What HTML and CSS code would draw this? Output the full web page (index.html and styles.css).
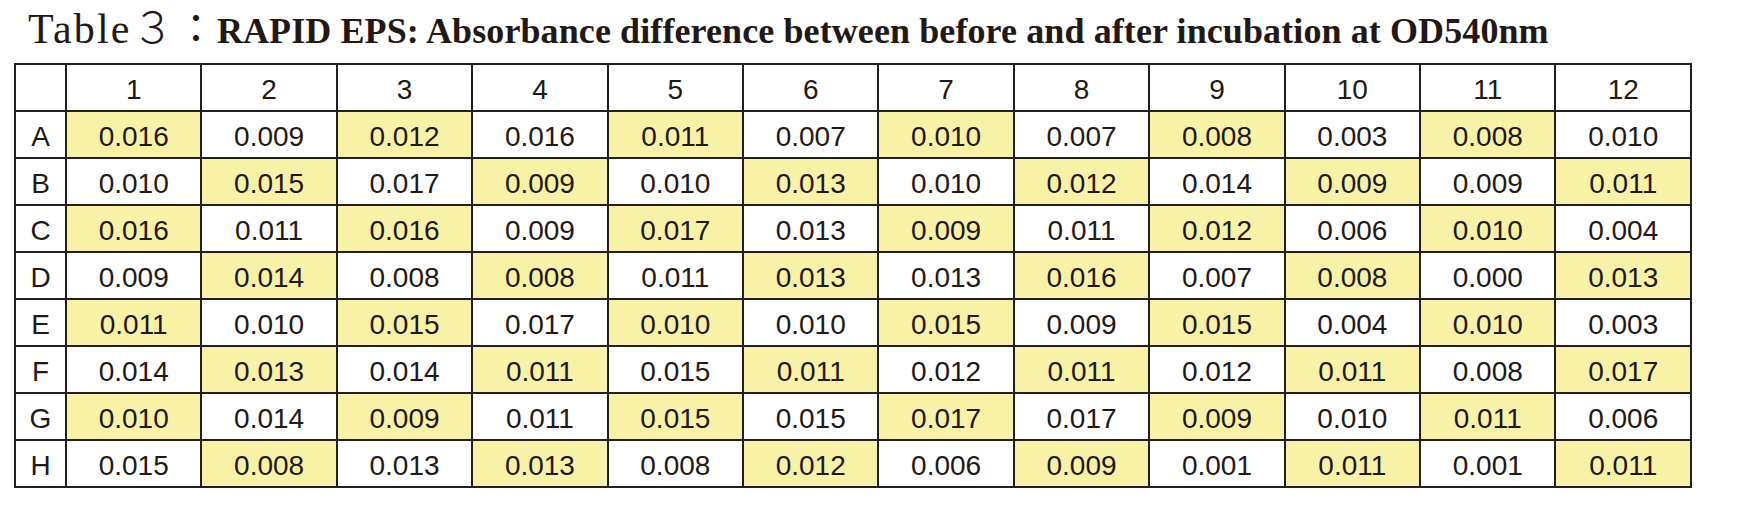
FILE: index.html
```html
<!DOCTYPE html>
<html lang="en">
<head>
    <meta charset="UTF-8">
    <title>Table 3 - RAPID EPS</title>
    <link rel="stylesheet" href="styles.css">
</head>
<body>

    <h1 class="caption">
        <span class="caption-num">Table３</span><span class="caption-colon">：</span><span class="caption-text">RAPID EPS: Absorbance difference between before and after incubation at OD540nm</span>
    </h1>

    <table class="plate">
        <thead>
            <tr>
                <th class="corner"></th>
                <th>1</th><th>2</th><th>3</th><th>4</th><th>5</th><th>6</th>
                <th>7</th><th>8</th><th>9</th><th>10</th><th>11</th><th>12</th>
            </tr>
        </thead>
        <tbody>
            <tr>
                <th>A</th>
                <td>0.016</td><td>0.009</td><td>0.012</td><td>0.016</td><td>0.011</td><td>0.007</td>
                <td>0.010</td><td>0.007</td><td>0.008</td><td>0.003</td><td>0.008</td><td>0.010</td>
            </tr>
            <tr>
                <th>B</th>
                <td>0.010</td><td>0.015</td><td>0.017</td><td>0.009</td><td>0.010</td><td>0.013</td>
                <td>0.010</td><td>0.012</td><td>0.014</td><td>0.009</td><td>0.009</td><td>0.011</td>
            </tr>
            <tr>
                <th>C</th>
                <td>0.016</td><td>0.011</td><td>0.016</td><td>0.009</td><td>0.017</td><td>0.013</td>
                <td>0.009</td><td>0.011</td><td>0.012</td><td>0.006</td><td>0.010</td><td>0.004</td>
            </tr>
            <tr>
                <th>D</th>
                <td>0.009</td><td>0.014</td><td>0.008</td><td>0.008</td><td>0.011</td><td>0.013</td>
                <td>0.013</td><td>0.016</td><td>0.007</td><td>0.008</td><td>0.000</td><td>0.013</td>
            </tr>
            <tr>
                <th>E</th>
                <td>0.011</td><td>0.010</td><td>0.015</td><td>0.017</td><td>0.010</td><td>0.010</td>
                <td>0.015</td><td>0.009</td><td>0.015</td><td>0.004</td><td>0.010</td><td>0.003</td>
            </tr>
            <tr>
                <th>F</th>
                <td>0.014</td><td>0.013</td><td>0.014</td><td>0.011</td><td>0.015</td><td>0.011</td>
                <td>0.012</td><td>0.011</td><td>0.012</td><td>0.011</td><td>0.008</td><td>0.017</td>
            </tr>
            <tr>
                <th>G</th>
                <td>0.010</td><td>0.014</td><td>0.009</td><td>0.011</td><td>0.015</td><td>0.015</td>
                <td>0.017</td><td>0.017</td><td>0.009</td><td>0.010</td><td>0.011</td><td>0.006</td>
            </tr>
            <tr>
                <th>H</th>
                <td>0.015</td><td>0.008</td><td>0.013</td><td>0.013</td><td>0.008</td><td>0.012</td>
                <td>0.006</td><td>0.009</td><td>0.001</td><td>0.011</td><td>0.001</td><td>0.011</td>
            </tr>
        </tbody>
    </table>

</body>
</html>
```

FILE: styles.css
```css
* {
    margin: 0;
    padding: 0;
    box-sizing: border-box;
}

body {
    background-color: white;
    color: #231815;
    padding: 4px 0 0 14px;
}

.caption {
    display: flex;
    align-items: baseline;
    height: 59px;
    line-height: 44px;
    padding-left: 14px;
    font-weight: normal;
    white-space: nowrap;
}

.caption-num {
    font-family: "Liberation Serif", "Noto Sans CJK JP", serif;
    font-size: 42px;
    font-weight: 300;
    letter-spacing: 2.2px;
}

.caption-colon {
    font-family: "Noto Sans CJK JP", sans-serif;
    font-size: 40px;
    width: 41px;
}

.caption-text {
    font-family: "Liberation Serif", serif;
    font-weight: bold;
    font-size: 36px;
    letter-spacing: 0.1px;
}

.plate {
    border-collapse: collapse;
    width: 1678px;
    table-layout: fixed;
    border: 2px solid #231f20;
    font-family: "Liberation Sans", Arial, sans-serif;
    font-size: 28px;
}

.plate th, .plate td {
    border: 2px solid #231f20;
    height: 47px;
    padding-top: 4px;
    text-align: center;
    font-weight: normal;
    vertical-align: middle;
}

.plate .corner {
    width: 51px;
}

/* checkerboard of the plate wells */
.plate tbody tr:nth-child(odd) td:nth-child(even),
.plate tbody tr:nth-child(even) td:nth-child(odd) {
    background-color: #f8f2a7;
}
```
